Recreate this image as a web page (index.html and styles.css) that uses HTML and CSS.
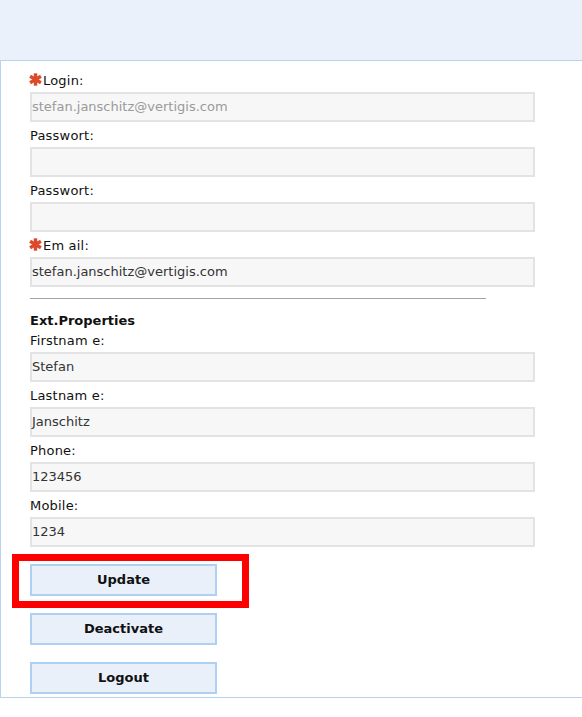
FILE: index.html
```html
<!DOCTYPE html>
<html>
<head>
<meta charset="utf-8">
<link rel="stylesheet" href="styles.css">
</head>
<body>
<div class="header"></div>
<div class="panel">
  <div class="field">
    <div class="label"><svg class="star" viewBox="0 0 12 12"><g stroke="#dd4a2a" stroke-width="3.2" stroke-linecap="butt"><line x1="6" y1="0.3" x2="6" y2="11.7"/><line x1="1" y1="3.1" x2="11" y2="8.9"/><line x1="1" y1="8.9" x2="11" y2="3.1"/></g></svg>Login:</div>
    <div class="input disabled">stefan.janschitz@vertigis.com</div>
  </div>
  <div class="field">
    <div class="label">Passwort:</div>
    <div class="input"></div>
  </div>
  <div class="field">
    <div class="label">Passwort:</div>
    <div class="input"></div>
  </div>
  <div class="field">
    <div class="label"><svg class="star" viewBox="0 0 12 12"><g stroke="#dd4a2a" stroke-width="3.2" stroke-linecap="butt"><line x1="6" y1="0.3" x2="6" y2="11.7"/><line x1="1" y1="3.1" x2="11" y2="8.9"/><line x1="1" y1="8.9" x2="11" y2="3.1"/></g></svg>Em ail:</div>
    <div class="input">stefan.janschitz@vertigis.com</div>
  </div>
  <div class="rule"></div>
  <div class="section">Ext.Properties</div>
  <div class="field">
    <div class="label">Firstnam e:</div>
    <div class="input">Stefan</div>
  </div>
  <div class="field">
    <div class="label">Lastnam e:</div>
    <div class="input">Janschitz</div>
  </div>
  <div class="field">
    <div class="label">Phone:</div>
    <div class="input">123456</div>
  </div>
  <div class="field">
    <div class="label">Mobile:</div>
    <div class="input">1234</div>
  </div>
  <div class="buttons">
    <div class="btn-wrap">
      <div class="btn">Update</div>
      <div class="highlight"></div>
    </div>
    <div class="btn">Deactivate</div>
    <div class="btn">Logout</div>
  </div>
</div>
</body>
</html>
```
FILE: styles.css
```css
html, body {
  margin: 0;
  padding: 0;
  background: #ffffff;
}
body {
  font-family: "DejaVu Sans", "Liberation Sans", sans-serif;
  font-size: 13px;
  color: #111;
}
.header {
  height: 60px;
  background: #eaf1fa;
  border-bottom: 1px solid #b8d3ef;
}
.panel {
  border-left: 1px solid #b8d3ef;
  border-bottom: 1px solid #b8d3ef;
  padding: 11px 0 3px 29px;
}
.field {
  margin-bottom: 5px;
}
.label {
  display: flex;
  align-items: center;
  height: 17px;
  line-height: 17px;
  margin-bottom: 3px;
  color: #111;
  letter-spacing: 0.2px;
}
.star {
  width: 13px;
  height: 13px;
  margin-left: -1px;
  margin-right: 1px;
  margin-top: -3px;
}
.input {
  box-sizing: border-box;
  width: 505px;
  height: 30px;
  background: #f7f7f7;
  border: 2px solid #e3e3e3;
  padding: 0 1px 0 0;
  line-height: 25px;
  color: #333;
}
.input.disabled {
  color: #9a9a9a;
}
.rule {
  width: 456px;
  height: 1px;
  background: #a3a3a3;
  margin: 11px 0 13px 0;
}
.section {
  font-weight: bold;
  line-height: 17px;
  margin-bottom: 3px;
  color: #111;
}
.buttons {
  display: flex;
  flex-direction: column;
  gap: 17px;
  margin-top: 17px;
}
.btn-wrap {
  position: relative;
}
.btn {
  box-sizing: border-box;
  width: 187px;
  height: 32px;
  background: #e9f0fa;
  border: 2px solid #b0d0f3;
  font-weight: bold;
  text-align: center;
  line-height: 28px;
  color: #111;
}
.highlight {
  position: absolute;
  left: -18px;
  top: -10px;
  width: 237px;
  height: 54px;
  box-sizing: border-box;
  border: 7px solid #ff0000;
}
```
